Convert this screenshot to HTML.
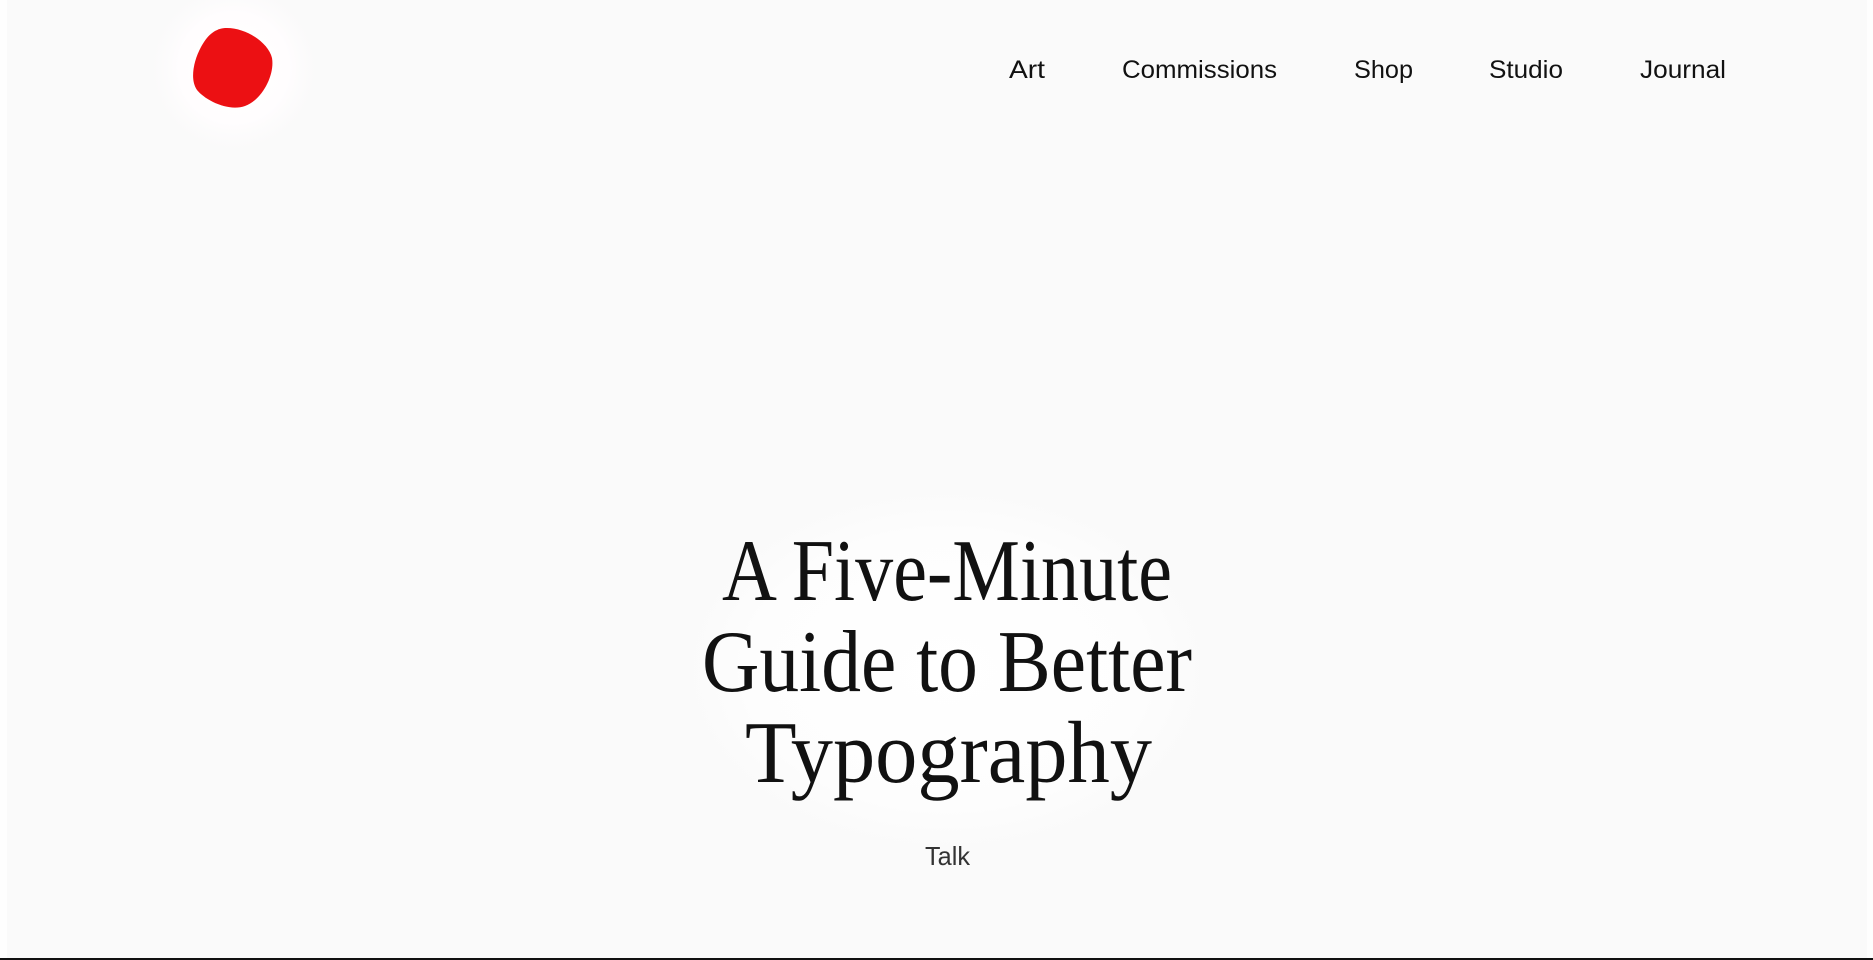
<!DOCTYPE html>
<html><head><meta charset="utf-8"><style>
html,body{margin:0;padding:0;width:1873px;height:960px;overflow:hidden;background:#fafafa}
svg{display:block}
</style></head><body>
<svg width="1873" height="960" viewBox="0 0 1873 960" xmlns="http://www.w3.org/2000/svg">
<defs>
<radialGradient id="g1"><stop offset="0" stop-color="#fff"/><stop offset="0.6" stop-color="#fffdfe"/><stop offset="1" stop-color="#fafafa" stop-opacity="0"/></radialGradient>
<radialGradient id="g2"><stop offset="0" stop-color="#fff"/><stop offset="0.7" stop-color="#fdfdfd"/><stop offset="1" stop-color="#fafafa" stop-opacity="0"/></radialGradient>
</defs>
<rect width="1873" height="960" fill="#fafafa"/>
<rect x="0" y="0" width="7" height="960" fill="#fefefe"/>
<rect x="1867" y="0" width="6" height="960" fill="#fefefe"/>
<circle cx="234" cy="68" r="92" fill="url(#g1)"/>
<path d="M225,28 C245,27 268,42 272,58 C275,75 262,100 245,106 C228,112 205,100 197,90 C190,80 193,62 201,47 C207,36 214,29 225,28 Z" fill="#ec1013"/>
<g font-family="Liberation Sans, sans-serif" font-size="25" fill="#111">
<text x="1009" y="78" textLength="36" lengthAdjust="spacingAndGlyphs">Art</text>
<text x="1122" y="78" textLength="155" lengthAdjust="spacingAndGlyphs">Commissions</text>
<text x="1354" y="78" textLength="59" lengthAdjust="spacingAndGlyphs">Shop</text>
<text x="1489" y="78" textLength="74" lengthAdjust="spacingAndGlyphs">Studio</text>
<text x="1640" y="78" textLength="86" lengthAdjust="spacingAndGlyphs">Journal</text>
</g>
<ellipse cx="947" cy="670" rx="290" ry="200" fill="url(#g2)"/>
<g font-family="Liberation Serif, serif" font-size="88" fill="#111">
<text x="722" y="600" textLength="450" lengthAdjust="spacingAndGlyphs">A Five-Minute</text>
<text x="702" y="691" textLength="490" lengthAdjust="spacingAndGlyphs">Guide to Better</text>
<text x="745" y="782" textLength="407" lengthAdjust="spacingAndGlyphs">Typography</text>
</g>
<text x="925" y="865" font-family="Liberation Sans, sans-serif" font-size="26" fill="#333" textLength="45" lengthAdjust="spacingAndGlyphs">Talk</text>
<rect x="0" y="958" width="1873" height="2" fill="#111"/>
</svg>
</body></html>
